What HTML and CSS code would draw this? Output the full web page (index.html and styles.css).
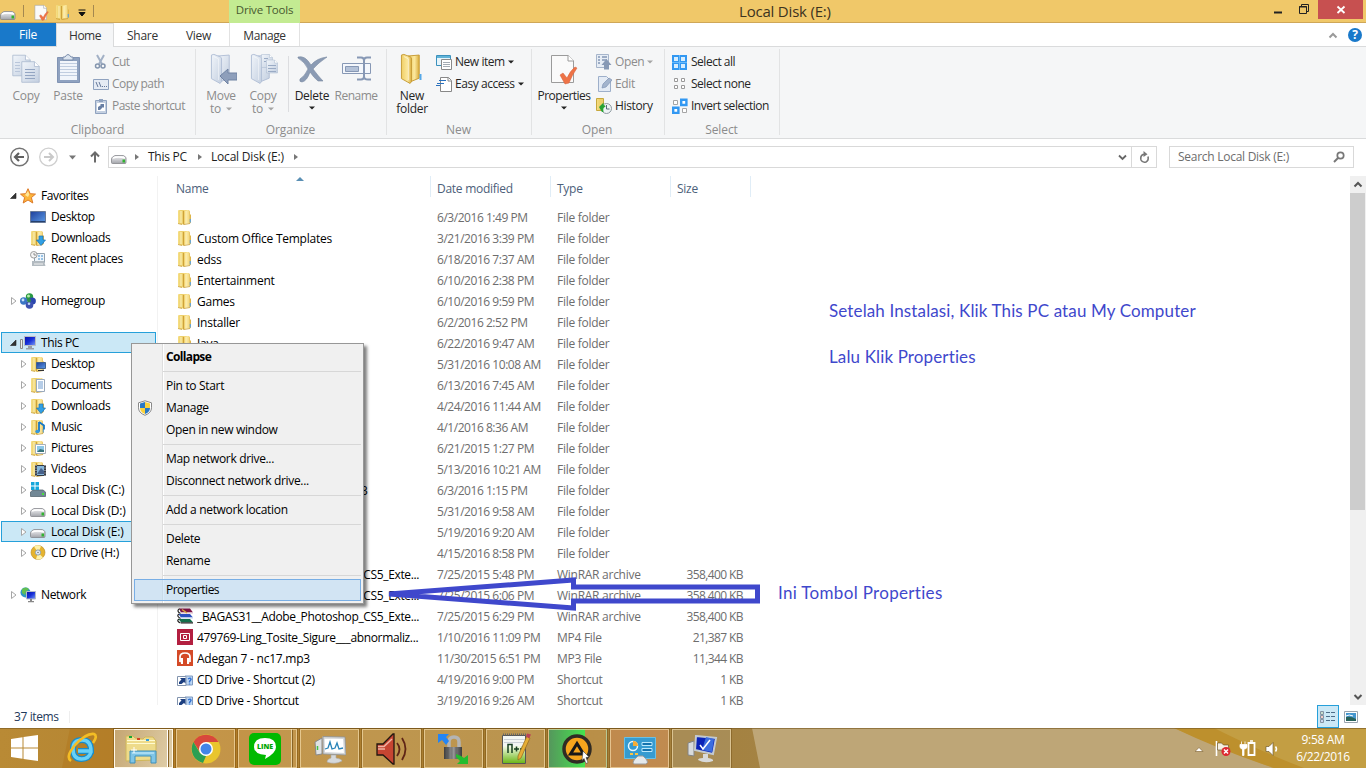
FILE: index.html
```html
<!DOCTYPE html>
<html lang="en">
<head>
<meta charset="utf-8">
<title>Local Disk (E:)</title>
<link rel="stylesheet" href="styles.css">
</head>
<body>
<svg class="defs" width="0" height="0">
  <defs>
    <linearGradient id="gold" x1="0" x2="1"><stop offset="0" stop-color="#f6df86"/><stop offset=".5" stop-color="#edd06a"/><stop offset="1" stop-color="#ecd070"/></linearGradient>
    <linearGradient id="goldB" x1="0" x2="1"><stop offset="0" stop-color="#f0cf66"/><stop offset=".6" stop-color="#fbe79c"/><stop offset="1" stop-color="#d9ab3a"/></linearGradient>
    <linearGradient id="steel" x1="0" y1="0" x2="1" y2="1"><stop offset="0" stop-color="#f1f5fa"/><stop offset="1" stop-color="#c3cfe0"/></linearGradient>
    <linearGradient id="blue" x1="0" y1="0" x2="1" y2="1"><stop offset="0" stop-color="#1d3f9b"/><stop offset="1" stop-color="#5d9be6"/></linearGradient>
    <linearGradient id="deep" x1="0" y1="0" x2="1" y2="1"><stop offset="0" stop-color="#0410a8"/><stop offset=".5" stop-color="#1830d8"/><stop offset="1" stop-color="#7da0f4"/></linearGradient>
    <linearGradient id="metal" x1="0" y1="0" x2="0" y2="1"><stop offset="0" stop-color="#f6f6f8"/><stop offset="1" stop-color="#a2a4aa"/></linearGradient>
    <linearGradient id="lock" x1="0" x2="1"><stop offset="0" stop-color="#3e3e3e"/><stop offset=".5" stop-color="#9a9a9a"/><stop offset="1" stop-color="#3c3c3c"/></linearGradient>
    <linearGradient id="lime" x1="0" y1="0" x2="0" y2="1"><stop offset="0" stop-color="#f4fbe9"/><stop offset="1" stop-color="#6cb719"/></linearGradient>
    <symbol id="folder" viewBox="0 0 16 16"><path d="M1 1.500Q1 1 2 1h5v13.500l-1 1-5-1z" fill="url(#gold)"/><path d="M6.500 2Q6.500 1 8 1h4l1 1.500V5l1 1v7.500l-1 1H8.500L6.500 16z" fill="url(#goldB)"/><path d="M6.500 2v13.500" stroke="#c99c34" stroke-width=".9"/><path d="M4 2v12M9 2v12" stroke="#fff8cf" stroke-width=".9"/><path d="M1 14.500l4 1M7 15.500l6-1" stroke="#c99f3b" stroke-width=".8"/><path d="M13.300 10v3.500" stroke="#5fa3dc" stroke-width="1.200"/></symbol>
    <symbol id="desktop" viewBox="0 0 16 16"><path d="M.5 2.500h15v11H.5z" fill="url(#blue)" stroke="#687a98"/><path d="M1 12.500h14" stroke="#25406d"/></symbol>
    <symbol id="down" viewBox="0 0 16 16"><use href="#folder"/><path d="M9 6h4v4h2.500L11 15.500 6.500 10H9z" fill="#31a0e4" stroke="#1c72b5" stroke-width=".7"/></symbol>
    <symbol id="fdesk" viewBox="0 0 16 16"><use href="#folder"/><path d="M6.500 6.500h9v6h-9z" fill="url(#blue)" stroke="#43648f"/><path d="M8 14.500h6" stroke="#333"/></symbol>
    <symbol id="fdoc" viewBox="0 0 16 16"><use href="#folder"/><path d="M6.500 2.500h8v12h-8z" fill="#fff" stroke="#9aa9ba"/><path d="M8 5h5M8 7h5M8 9h5M8 11h5" stroke="#6c9bd0"/></symbol>
    <symbol id="fmus" viewBox="0 0 16 16"><use href="#folder"/><path d="M9 3v9.500M9 3l5 3.500v4" stroke="#1679c8" stroke-width="1.800" fill="none"/><ellipse cx="7.500" cy="12.500" rx="2.200" ry="1.800" fill="#3599dd"/></symbol>
    <symbol id="fpic" viewBox="0 0 16 16"><use href="#folder"/><path d="M5.500 4.500h10v9h-10z" fill="#fff" stroke="#a8b0b8"/><path d="M7 6h7v6H7z" fill="#8cc7e7"/><path d="M7 12l3-3 4 1v2z" fill="#39757b"/></symbol>
    <symbol id="fvid" viewBox="0 0 16 16"><use href="#folder"/><path d="M5 4h11v11H5z" fill="#353b45"/><path d="M7 5h7v9H7z" fill="#85b5d9"/><path d="M7 13l4-6 3 3v3z" fill="#47618a"/><path d="M6 4v11M15 4v11" stroke="#ddd" stroke-dasharray="1 1.500"/></symbol>
    <symbol id="recent" viewBox="0 0 16 16"><path d="M4.500 2.500h10v9h-10z" fill="#eef5fb" stroke="#93a1ad"/><path d="M2 10h12l1.500 5H2z" fill="#b3bbc1"/><path d="M8 5h2M11 5h2M8 8h2M11 8h2" stroke="#3e8fd0"/><circle cx="3.800" cy="3.800" r="3.300" fill="#f4f4f4" stroke="#9b9b9b"/><path d="M4 2v2h2" stroke="#777" fill="none" stroke-width=".8"/><path d="M4 13h9" stroke="#f1f1f1"/></symbol>
    <symbol id="star" viewBox="0 0 16 16"><path d="M8 .7l2.200 5 5.300.4-4.100 3.500 1.400 5.400L8 12l-4.800 3 1.400-5.400L.5 6.100l5.300-.4z" fill="#fcb53b" stroke="#dd7927"/><path d="M8 3l1.300 3.500L8 9 5 7z" fill="#ffe79a"/></symbol>
    <symbol id="home" viewBox="0 0 16 16"><circle cx="9.500" cy="4" r="3.700" fill="#2a9a43"/><circle cx="3.700" cy="8" r="3.700" fill="#3a75c4"/><circle cx="12.300" cy="8" r="3.600" fill="#2b46ae"/><circle cx="9.500" cy="12" r="3.800" fill="#3d52b0"/><circle cx="9" cy="7.500" r="2" fill="#2f8a4c"/><circle cx="8.500" cy="3" r="1.500" fill="#b9eda9"/><circle cx="3" cy="7" r="1.400" fill="#c8e2fa"/><circle cx="9" cy="10.800" r="1.300" fill="#bcd0f5"/></symbol>
    <symbol id="pc" viewBox="0 0 16 16"><path d="M.5 4.500h2v9h-2z" fill="#eee" stroke="#888"/><path d="M4.500 1.500h11v9h-11z" fill="url(#deep)" stroke="#b8bcc4"/><path d="M8 11h4v2h2v1.500H6V13h2z" fill="#999da5"/></symbol>
    <symbol id="net" viewBox="0 0 16 16"><circle cx="5.500" cy="5.500" r="5" fill="#2d95c5"/><path d="M2 2q4-3 7 0L6 5 5 8 2 6z" fill="#61bf51"/><path d="M6.500 4.500h9v7.500h-9z" fill="url(#deep)" stroke="#b5bdc8"/><path d="M10 12h2v2h2v1.200H8V14h2z" fill="#888"/></symbol>
    <symbol id="drive" viewBox="0 0 16 16"><path d="M1.500 7 4 5.500h8.500L15 7.500v5q0 1-1 1H1.500q-1 0-1-1V8.500z" fill="url(#metal)" stroke="#85878c" stroke-width=".8"/><path d="M2 8q5-1.800 12 0" stroke="#fff" stroke-width="1.500" fill="none"/><path d="M11.500 9.500h2.500v3h-2.500z" fill="#31b330"/></symbol>
    <symbol id="cdrive" viewBox="0 0 16 16"><path d="M.5 10 3 8h10l2.500 2v4.500H.5z" fill="#718795" stroke="#586771" stroke-width=".8"/><path d="M12 11h2v2h-2z" fill="#48e03c"/><path d="M1 0h3.500v3.500H1zM5.500 0H9v3.500H5.500zM1 4.500h3.500V8H1zM5.500 4.500H9V8H5.500z" fill="#15a7db"/></symbol>
    <symbol id="cd" viewBox="0 0 16 16"><circle cx="8" cy="7.500" r="7" fill="#e5b32e" stroke="#b48a26" stroke-width=".6"/><path d="M8 7.500 4 1.500Q8-1 11 1.500zM8 7.500l5 5q-3 3-7 1.500z" fill="#fff1a8"/><circle cx="8" cy="7.500" r="2.600" fill="#e7eef5" stroke="#8ba0b3"/><circle cx="8" cy="7.500" r=".8" fill="#777"/></symbol>
    <symbol id="rar" viewBox="0 0 16 16"><path d="M2 .5h11l3 4H4z" fill="#7d1345"/><path d="M4 4.500h12V6H4z" fill="#efdde2"/><path d="M1.500 6H13l3 3.500H4z" fill="#2b50c0"/><path d="M4 9.500h12V11H4z" fill="#dfe9f5"/><path d="M1.500 11H13l3 3.300H4z" fill="#136e4b"/><path d="M4 14.300h12v1.200H4z" fill="#1b1b1b"/><path d="M2.500.7Q-1 3 3.500 5.500M2 6q-3 2 1.500 4.500M2 11q-3 2 1.500 4" stroke="#222" stroke-width="1.200" fill="none"/><path d="M5 1.500l5 3.500" stroke="#d8a740" stroke-width="1.500"/></symbol>
    <symbol id="mp4" viewBox="0 0 16 16"><path d="M0 0h16v16H0z" fill="#b31f40"/><path d="M3.500 4.500h9v7h-9z" fill="none" stroke="#fff"/><path d="M6.500 6.500h3v3h-3z" fill="none" stroke="#fff"/></symbol>
    <symbol id="mp3" viewBox="0 0 16 16"><path d="M0 0h16v16H0z" fill="#d44a27"/><path d="M3 12V7q0-4 5-4t5 4v5" stroke="#fff" stroke-width="1.700" fill="none"/><path d="M3 8h3v6H4zM10 8h3l-1 6h-2z" fill="#fff"/></symbol>
    <symbol id="short" viewBox="0 0 16 16"><path d="M8 5h7.500v9H8z" fill="#bcd6f4" stroke="#7e9ac1"/><path d="M.5 5.500h8.500v9H.5z" fill="#fff" stroke="#8294ae"/><path d="M2 13v-2l2.500-2.500L3 7h5.500v5.500L7 11l-2.500 2z" fill="#1c3f80"/><path d="M11 8q3-2 3 .5l-1.500 2v1M12.500 12.500v1" stroke="#306fd0" fill="none" stroke-width="1.400"/></symbol>
    <symbol id="page" viewBox="0 0 24 28"><path d="M1 1h16l6 6v20H1z" fill="url(#steel)" stroke="#a9b8ce"/><path d="M17 1v6h6" fill="#fff" stroke="#a9b8ce"/></symbol>
    <symbol id="bigfolder" viewBox="0 0 26 32"><path d="M8 2.500 20 1.500v24L9 30z"/><path d="M1.500 1.500 4 .8l7 2.700q1 .5 1 2V29l-1.500 2-9-5z"/><path d="M4 3l5 2.500v22" fill="none" stroke="#fff" stroke-width="1" opacity=".55"/></symbol>
    <symbol id="check" viewBox="0 0 28 32"><path d="M1.500 2.500h17l5 5v22h-22z" fill="#fafafa" stroke="#9b9b9b"/><path d="M18 2v6h6" fill="#fff" stroke="#9b9b9b"/><path d="M10 22l3-2 4 5q3-7 8-11l2 1q-5 7-8 15l-4 1z" fill="#ee7347" stroke="#d45f38" stroke-width=".5"/></symbol>
    <symbol id="closed" viewBox="0 0 8 10"><path d="M2.500 1.500 7 5 2.500 8.500z" fill="#fff" stroke="#a6a6a6"/></symbol>
    <symbol id="opened" viewBox="0 0 8 10"><path d="M7 2v5.500H1.500z" fill="#333" stroke="#222" stroke-width=".6"/></symbol>
    <symbol id="caret" viewBox="0 0 6 4"><path d="M0 .5h6L3 3.500z" fill="currentColor"/></symbol>
  </defs>
</svg>

<div class="window">
  <header class="titlebar">
    <div class="quick">
      <svg width="16" height="16"><use href="#drive"/></svg><i class="bar"></i>
      <svg class="q2" width="15" height="17"><use href="#check"/></svg>
      <svg class="q3" width="16" height="16"><use href="#folder"/></svg>
      <svg class="q4" width="8" height="8"><path d="M.5 1h7M1 3.500h6L4 7z" stroke="#111" fill="#111" stroke-width="1"/></svg><i class="bar"></i>
    </div>
    <div class="drive-tools">Drive Tools</div>
    <div class="caption">Local Disk (E:)</div>
    <div class="controls">
      <svg width="90" height="20"><path d="M10 12.500h8" stroke="#222" stroke-width="2"/><path d="M35.500 6.500h7v7h-7z M37.500 6V4.500h7v7H43" fill="none" stroke="#222"/><path d="M35 7h8" stroke="#222"/></svg>
      <div class="close"><svg width="10" height="10"><path d="M1.500 1.500l7 6.500M8.500 1.500l-7 6.500" stroke="#fff" stroke-width="1.800"/></svg></div>
    </div>
  </header>

  <nav class="tabs">
    <div class="tab file">File</div><div class="tab home">Home</div><div class="tab share">Share</div><div class="tab view">View</div><div class="tab manage">Manage</div>
    <div class="help"><svg width="10" height="8"><path d="M1.500 6.500 5 3l3.500 3.500" stroke="#9a9a9a" stroke-width="2" fill="none"/></svg><b>?</b></div>
  </nav>

  <section class="ribbon">
    <div class="group clip"><div class="tools">
      <div class="big off"><svg width="28" height="32"><use href="#page" x="0" y="0" width="19" height="25"/><use href="#page" x="9" y="7" width="19" height="24"/><path d="M13 16.500h10M13 19.500h10M13 22.500h10M13 25.500h10" stroke="#93a5c2"/><path d="M3 9.500h5M3 12.500h5M3 15.500h5M3 18.500h5" stroke="#b9c6da"/></svg>Copy</div>
      <div class="big off"><svg width="28" height="32"><path d="M3.500 4.500h22v25h-22z" fill="#8fa2c0" stroke="#8093b3"/><path d="M6 8h17v19H6z" fill="#f1f5fb"/><path d="M9 4h2q3-5 6 0h2v3H9z" fill="#dce5f0" stroke="#7a8dab"/><path d="M6 10.500h17M6 13.500h17M6 16.500h17M6 19.500h17M6 22.500h17" stroke="#c0cde0"/></svg>Paste</div>
      <div class="list off">
        <div><svg width="16" height="16"><path d="M4 1l5 9M11 1l-5 9" stroke="#a3b1c6" stroke-width="2"/><circle cx="4.500" cy="12" r="2" fill="none" stroke="#8495ae" stroke-width="1.500"/><circle cx="10" cy="12" r="2" fill="none" stroke="#8495ae" stroke-width="1.500"/></svg>Cut</div>
        <div><svg width="16" height="16"><path d="M.5 3.500h15v10H.5z" fill="#e5ebf4" stroke="#8fa2bf"/><path d="M3 6l2 5M6 6l2 5M9 10.500h1M11 10.500h1M13 10.500h1" stroke="#66799b"/></svg>Copy path</div>
        <div><svg width="16" height="16"><path d="M2.500 2.500h11v13h-11z" fill="#c4d0e1" stroke="#8fa2bf"/><path d="M4 5h8v8H4z" fill="#fff"/><path d="M6 1h4v3H6z" fill="#8fa2bf"/><path d="M5 12V9l3-2-1-1h4v4l-1-1-3 3z" fill="#687fa4"/></svg>Paste shortcut</div>
      </div></div><footer>Clipboard</footer></div>
    <div class="group org"><div class="tools">
      <div class="big off"><svg width="32" height="32"><use href="#bigfolder" x="5" y="0" width="25" height="32" fill="url(#steel)" stroke="#b2c0d6"/><path d="M15 23l8-7v4h9v7h-9v4z" fill="#8e9fbb" stroke="#7083a3"/></svg><span>Move<br>to <svg class="car" width="6" height="4"><use href="#caret"/></svg></span></div>
      <div class="big off"><svg width="32" height="32"><use href="#bigfolder" x="3" y="0" width="25" height="32" fill="url(#steel)" stroke="#b2c0d6"/><use href="#page" x="14" y="0" width="12" height="16"/><use href="#page" x="19" y="5" width="12" height="17"/><path d="M21 12.500h8M21 15.500h8M21 18.500h8M17 5.500h4M17 8.500h2" stroke="#9aabc5"/></svg><span>Copy<br>to <svg class="car" width="6" height="4"><use href="#caret"/></svg></span></div>
      <i class="split"></i>
      <div class="big del"><svg width="32" height="32"><path d="M2 4q7-2 13 8 6-7 16-8-9 6-14 12 6 8 10 12h-5q-4-3-8-9-3 9-8 10-3 0-2-3 5-3 8-10Q9 9 2 5z" fill="#8b9bb4" stroke="#76879f" stroke-width=".6"/></svg>Delete<svg class="car" width="6" height="4"><use href="#caret"/></svg></div>
      <div class="big off"><svg width="32" height="32"><path d="M2.500 10.500h28v10h-28z" fill="#f4f7fc" stroke="#8798b5"/><path d="M5.500 13.500h13v5h-13z" fill="#b4c2d8" stroke="#8798b5"/><path d="M17 4.500h4q3 0 3 3v16q0 3-3 3h-4M31 4.500h-4q-3 0-3 3M24 23.500q0 3 4 3h3" stroke="#8798b5" stroke-width="2" fill="none"/></svg>Rename</div>
      </div><footer>Organize</footer></div>
    <div class="group new"><div class="tools">
      <div class="big"><svg width="28" height="32"><use href="#bigfolder" x="2" y="0" width="25" height="32" fill="url(#goldB)" stroke="#c79c37"/><path d="M22.500 21v6" stroke="#55a8e8" stroke-width="2"/></svg><span>New<br>folder</span></div>
      <div class="list"><div><svg width="16" height="16"><path d="M.5 1.500h14v10H.5z" fill="#e7f4fa" stroke="#3b91bd"/><path d="M1 3h13" stroke="#61b3d7" stroke-width="2"/><path d="M5.500 5.500h10v10h-10z" fill="#fff" stroke="#8a8a8a"/><path d="M7 8.500h7M7 10.500h7M7 12.500h7" stroke="#a4acb4"/></svg>New item<svg class="car" width="6" height="4"><use href="#caret"/></svg></div>
      <div><svg width="16" height="16"><path d="M4.500 1.500h8l3 3v11h-11z" fill="#fff" stroke="#888"/><path d="M12 1.500v3.500h3" stroke="#888" fill="none"/><path d="M3 4.500h7M1 7.500h7M0 9.500h4" stroke="#2a71be" stroke-width="1.200"/></svg>Easy access<svg class="car" width="6" height="4"><use href="#caret"/></svg></div></div>
      </div><footer>New</footer></div>
    <div class="group open"><div class="tools">
      <div class="big prop"><svg width="28" height="32"><use href="#check"/></svg>Properties<svg class="car" width="6" height="4"><use href="#caret"/></svg></div>
      <div class="list"><div class="off"><svg width="16" height="16"><path d="M.5.5h12v13H.5z" fill="#e7edf5" stroke="#a6b5cb"/><path d="M2 3h2M2 6h2M2 9h2M6 3h5M6 6h5" stroke="#8497b5" stroke-width="1.500"/><path d="M10.500 5l5 6H13v4.500H8V11H5.500z" fill="#8799b5"/></svg>Open<svg class="car" width="6" height="4"><use href="#caret"/></svg></div>
      <div class="off"><svg width="16" height="16"><path d="M2.500.5h8l4 4v11h-12z" fill="#e4ebf5" stroke="#9dafca"/><path d="M6 12l1-4 6-6 3 2-6 7z" fill="#a3b4cd" stroke="#8094b5" stroke-width=".7"/></svg>Edit</div>
      <div><svg width="16" height="16"><path d="M.5.5h7v12h-7z" fill="url(#gold)" stroke="#c7a83d"/><circle cx="10.500" cy="10.500" r="5" fill="#eef3f5" stroke="#8d999f"/><path d="M10.500 7v4h3" stroke="#576a79" fill="none"/><path d="M3 9l4.500-4.500V7q2 0 2 2-3 0-2 5H6Q4 11 3 9z" fill="#28a334"/></svg>History</div></div>
      </div><footer>Open</footer></div>
    <div class="group sel"><div class="tools"><div class="list">
      <div><svg width="16" height="16"><path d="M0 1h15v15H0z" fill="#3298f2"/><path d="M2 3h4v4H2zM9 3h4v4H9zM2 10h4v4H2zM9 10h4v4H9z" fill="#d8eefe"/><path d="M7.500 1v15M0 8.500h15" stroke="#69bafb"/></svg>Select all</div>
      <div><svg width="16" height="16"><path d="M2.500 2.500h3v3h-3zM9.500 2.500h3v3h-3zM2.500 9.500h3v3h-3zM9.500 9.500h3v3h-3z" fill="#fff" stroke="#9a9a9a"/></svg>Select none</div>
      <div><svg width="16" height="16"><path d="M1.500 2.500h4v4h-4zM10.500 10.500h4v4h-4z" fill="#fff" stroke="#a5a5a5"/><path d="M9.200 1.700h5.200V7H9.200zM1.200 9.700h5.200V15H1.200z" fill="#fff" stroke="#3298f2" stroke-width="2.400"/></svg>Invert selection</div>
      </div></div><footer>Select</footer></div>
  </section>

  <section class="address">
    <svg width="104" height="32"><circle cx="19.500" cy="17" r="8.800" fill="#fff" stroke="#747474" stroke-width="1.500"/><path d="M24 17H15.500M19 13l-4 4 4 4" stroke="#606060" stroke-width="2.200" fill="none"/><circle cx="48.500" cy="17" r="8.800" fill="#fff" stroke="#cfcfcf" stroke-width="1.300"/><path d="M44 17H52.500M49 13l4 4-4 4" stroke="#c9c9c9" stroke-width="2" fill="none"/><path d="M69 15.500h7l-3.500 4z" fill="#777"/><path d="M95 22.500V13M91 16.500l4-4 4 4" stroke="#6b6b6b" stroke-width="2" fill="none"/></svg>
    <div class="path"><svg width="16" height="16"><use href="#drive"/></svg><i class="arrow"></i><span class="a1">This PC</span><i class="arrow"></i><span class="a2">Local Disk (E:)</span><i class="arrow"></i>
      <div class="refresh"><svg width="36" height="20"><path d="M2 8.500l3.500 3.500L9 8.500" stroke="#666" stroke-width="1.800" fill="none"/><path d="M14.500 0v20" stroke="#d9d9d9"/><path d="M31 9.500q1 4-2 5.500-3.500 1-5-2-1-4 2-5.500h2" stroke="#777" stroke-width="1.600" fill="none"/><path d="M26.500 4l4 3.200-4 2.800z" fill="#777"/></svg></div></div>
    <div class="search"><span>Search Local Disk (E:)</span><svg width="12" height="12"><circle cx="7.500" cy="4.500" r="3.200" fill="none" stroke="#777" stroke-width="1.700"/><path d="M5 7 1 11" stroke="#777" stroke-width="2"/></svg></div>
  </section>

  <main class="body">
    <aside class="side">
      <div class="node top"><svg class="tw"><use href="#opened"/></svg><svg class="ic"><use href="#star"/></svg>Favorites</div>
      <div class="node"><svg class="tw"></svg><svg class="ic"><use href="#desktop"/></svg>Desktop</div>
      <div class="node"><svg class="tw"></svg><svg class="ic"><use href="#down"/></svg>Downloads</div>
      <div class="node"><svg class="tw"></svg><svg class="ic"><use href="#recent"/></svg>Recent places</div>
      <div class="node"></div>
      <div class="node top"><svg class="tw"><use href="#closed"/></svg><svg class="ic"><use href="#home"/></svg>Homegroup</div>
      <div class="node"></div>
      <div class="node top on"><svg class="tw"><use href="#opened"/></svg><svg class="ic"><use href="#pc"/></svg>This PC</div>
      <div class="node"><svg class="tw"><use href="#closed"/></svg><svg class="ic"><use href="#fdesk"/></svg>Desktop</div>
      <div class="node"><svg class="tw"><use href="#closed"/></svg><svg class="ic"><use href="#fdoc"/></svg>Documents</div>
      <div class="node"><svg class="tw"><use href="#closed"/></svg><svg class="ic"><use href="#down"/></svg>Downloads</div>
      <div class="node"><svg class="tw"><use href="#closed"/></svg><svg class="ic"><use href="#fmus"/></svg>Music</div>
      <div class="node"><svg class="tw"><use href="#closed"/></svg><svg class="ic"><use href="#fpic"/></svg>Pictures</div>
      <div class="node"><svg class="tw"><use href="#closed"/></svg><svg class="ic"><use href="#fvid"/></svg>Videos</div>
      <div class="node disk"><svg class="tw"><use href="#closed"/></svg><svg class="ic"><use href="#cdrive"/></svg>Local Disk (C:)</div>
      <div class="node disk"><svg class="tw"><use href="#closed"/></svg><svg class="ic"><use href="#drive"/></svg>Local Disk (D:)</div>
      <div class="node on disk"><svg class="tw"><use href="#closed"/></svg><svg class="ic"><use href="#drive"/></svg>Local Disk (E:)</div>
      <div class="node disk"><svg class="tw"><use href="#closed"/></svg><svg class="ic"><use href="#cd"/></svg>CD Drive (H:)</div>
      <div class="node"></div>
      <div class="node top"><svg class="tw"><use href="#closed"/></svg><svg class="ic"><use href="#net"/></svg>Network</div>
    </aside>
    <div class="files">
      <div class="head"><span>Name</span><span>Date modified</span><span>Type</span><span>Size</span><svg class="sort" width="8" height="4"><path d="M0 4 4 0l4 4z" fill="#5a8fb4"/></svg></div>
      <div class="row"><svg><use href="#folder"/></svg><b></b><span>6/3/2016 1:49 PM</span><span>File folder</span></div>
      <div class="row"><svg><use href="#folder"/></svg><b>Custom Office Templates</b><span>3/21/2016 3:39 PM</span><span>File folder</span></div>
      <div class="row"><svg><use href="#folder"/></svg><b>edss</b><span>6/18/2016 7:37 AM</span><span>File folder</span></div>
      <div class="row"><svg><use href="#folder"/></svg><b>Entertainment</b><span>6/10/2016 2:38 PM</span><span>File folder</span></div>
      <div class="row"><svg><use href="#folder"/></svg><b>Games</b><span>6/10/2016 9:59 PM</span><span>File folder</span></div>
      <div class="row"><svg><use href="#folder"/></svg><b>Installer</b><span>6/2/2016 2:52 PM</span><span>File folder</span></div>
      <div class="row"><svg><use href="#folder"/></svg><b>Java</b><span>6/22/2016 9:47 AM</span><span>File folder</span></div>
      <div class="row"><svg><use href="#folder"/></svg><b></b><span>5/31/2016 10:08 AM</span><span>File folder</span></div>
      <div class="row"><svg><use href="#folder"/></svg><b></b><span>6/13/2016 7:45 AM</span><span>File folder</span></div>
      <div class="row"><svg><use href="#folder"/></svg><b></b><span>4/24/2016 11:44 AM</span><span>File folder</span></div>
      <div class="row"><svg><use href="#folder"/></svg><b></b><span>4/1/2016 8:36 AM</span><span>File folder</span></div>
      <div class="row"><svg><use href="#folder"/></svg><b></b><span>6/21/2015 1:27 PM</span><span>File folder</span></div>
      <div class="row"><svg><use href="#folder"/></svg><b></b><span>5/13/2016 10:21 AM</span><span>File folder</span></div>
      <div class="row"><svg><use href="#folder"/></svg><b class="tail">3</b><span>6/3/2016 1:15 PM</span><span>File folder</span></div>
      <div class="row"><svg><use href="#folder"/></svg><b></b><span>5/31/2016 9:58 AM</span><span>File folder</span></div>
      <div class="row"><svg><use href="#folder"/></svg><b></b><span>5/19/2016 9:20 AM</span><span>File folder</span></div>
      <div class="row"><svg><use href="#folder"/></svg><b></b><span>4/15/2016 8:58 PM</span><span>File folder</span></div>
      <div class="row"><svg><use href="#rar"/></svg><b class="rar">_BAGAS31__Adobe_Photoshop_CS5_Exte...</b><span>7/25/2015 5:48 PM</span><span>WinRAR archive</span><em>358,400 KB</em></div>
      <div class="row"><svg><use href="#rar"/></svg><b class="rar">_BAGAS31__Adobe_Photoshop_CS5_Exte...</b><span>7/25/2015 6:06 PM</span><span>WinRAR archive</span><em>358,400 KB</em></div>
      <div class="row"><svg><use href="#rar"/></svg><b class="rar">_BAGAS31__Adobe_Photoshop_CS5_Exte...</b><span>7/25/2015 6:29 PM</span><span>WinRAR archive</span><em>358,400 KB</em></div>
      <div class="row"><svg><use href="#mp4"/></svg><b class="rar">479769-Ling_Tosite_Sigure___abnormaliz...</b><span>1/10/2016 11:09 PM</span><span>MP4 File</span><em>21,387 KB</em></div>
      <div class="row"><svg><use href="#mp3"/></svg><b>Adegan 7 - nc17.mp3</b><span>11/30/2015 6:51 PM</span><span>MP3 File</span><em>11,344 KB</em></div>
      <div class="row"><svg><use href="#short"/></svg><b>CD Drive - Shortcut (2)</b><span>4/19/2016 9:00 PM</span><span>Shortcut</span><em>1 KB</em></div>
      <div class="row"><svg><use href="#short"/></svg><b>CD Drive - Shortcut</b><span>3/19/2016 9:26 AM</span><span>Shortcut</span><em>1 KB</em></div>
    </div>
    <div class="scroll"><svg width="16" height="16"><path d="M4.500 10.500 8 7l3.500 3.500" stroke="#555" stroke-width="2" fill="none"/></svg><i></i><svg width="16" height="16"><path d="M4.500 6l3.500 3.500L11.500 6" stroke="#555" stroke-width="2" fill="none"/></svg></div>
  </main>

  <footer class="status"><span>37 items</span><i></i>
    <div class="views"><div class="details"><svg width="16" height="14"><path d="M.5 1.500h3v3h-3zM.5 5.500h3v3h-3zM.5 9.500h3v3h-3z" fill="#fff" stroke="#8493a3"/><path d="M1.500 3h1" stroke="#277b3e"/><path d="M1.500 7h1" stroke="#d43122"/><path d="M1.500 11h1" stroke="#2a62bf"/><path d="M6 2.500h4M11 2.500h4M6 6.500h4M11 6.500h4M6 10.500h4M11 10.500h4" stroke="#4d6d89"/></svg></div><svg width="14" height="12"><path d="M.5.5h13v11H.5z" fill="#fff" stroke="#9aa4ae"/><path d="M2 2h10v8H2z" fill="#4597cf"/><path d="M2 6q5-1 10 2v2H2z" fill="#29635a"/><path d="M2 5q3-2 7 0" stroke="#fff" fill="none"/></svg></div>
  </footer>
</div>

<footer class="taskbar">
  <svg class="wall" width="1366" height="40"><defs><linearGradient id="wood"><stop offset="0" stop-color="#b98a35"/><stop offset=".35" stop-color="#b1802f"/><stop offset=".7" stop-color="#a57c31"/><stop offset="1" stop-color="#a48344"/></linearGradient></defs><path d="M0 0h770v40H0z" fill="url(#wood)"/><path d="M70 0h200v40H62z" fill="#b37a22" opacity=".6"/><path d="M752 0h450l100 40H760z" fill="#bea677"/><path d="M1174 0q60 26 100 40h92V0z" fill="#c39e43"/><path d="M1174 0h40q50 25 90 40h-30Q1220 22 1174 0z" fill="#bd902d"/><path d="M0 .5h1366" stroke="#7c5c24" opacity=".65"/></svg>
  <div class="start"><svg width="28" height="26"><path d="M0 4 11.500 2.300v10.200H0zM12.500 2.100 27 0v12.500H12.500zM0 13.500h11.500v10.200L0 22zM12.500 13.500H27V26l-14.500-2.100z" fill="#fff"/></svg></div>
  <div class="ie"><svg width="32" height="32"><path d="M25 20q-2 7-9.500 7Q7 27 7 17q0-9 9-9 9 0 9 11H12" fill="none" stroke="#198cc9" stroke-width="6"/><path d="M25 20q-2 7-9.500 7Q7 27 7 17q0-9 9-9 9 0 9 11H12" fill="none" stroke="#68d1f8" stroke-width="3.500"/><path d="M5 29q-6-4 4-16Q20 1 28 2q4 2-1 9" fill="none" stroke="#f4bd24" stroke-width="2.600"/></svg></div>
  <div class="task active stack"><svg width="32" height="32"><path d="M1 6V3h7l2 2 8 1 2-2h8l3 4v19L1 28z" fill="#eedb8a" stroke="#d0b75a"/><path d="M2 7.500h28M2 10.500h28" stroke="#fffbd2"/><path d="M4 4h3" stroke="#18a63b" stroke-width="2"/><path d="M12 6h3" stroke="#d54324" stroke-width="2"/><path d="M21 7h3" stroke="#359ddc" stroke-width="2"/><path d="M5 18h26v12h-5v-7H10v7H5z" fill="#7fc5e6" stroke="#3e8fb9"/><path d="M7 20h22" stroke="#d1f1ff"/><path d="M9 14v6M6 17h6" stroke="#fff"/></svg></div>
  <div class="task"><svg width="32" height="32"><circle cx="16" cy="16" r="14.500" fill="#e9c52e"/><path d="M3.400 9A14.500 14.500 0 0 1 28.600 9H16L10 19z" fill="#d8483c"/><path d="M3.400 9 10 20l6 3-3 7A14.500 14.500 0 0 1 3.400 9z" fill="#2b9f53"/><circle cx="16" cy="16" r="7" fill="#fff"/><circle cx="16" cy="16" r="5.500" fill="#4285e8"/></svg></div>
  <div class="task stack"><div class="line"><svg width="32" height="32"><path d="M5 14q0-9 11-9t11 9q0 6-11 12l1-4Q5 21 5 14z" fill="#fff"/></svg><b>LINE</b></div></div>
  <div class="task"><svg width="32" height="32"><path d="M1 9l7-4v16l-6 1z" fill="#dfe2e4" stroke="#888"/><path d="M3.500 13v4" stroke="#43c243" stroke-width="1.500"/><path d="M9.500 4.500 30 5l1 16-21-1z" fill="#fff" stroke="#d2d5d8" stroke-width="2"/><path d="M9 3.500 31 4l1 18-23-1z" fill="none" stroke="#8d9194" stroke-width=".8"/><path d="M11 16l3-1 2-6 2 7 3-1 2-5 2 6 4-1" fill="none" stroke="#2984b8" stroke-width="1.300"/><path d="M17 22h5v3q6 1 6 3-7 4-15 1 0-3 4-4z" fill="#d6d9db" stroke="#aaa" stroke-width=".6"/></svg></div>
  <div class="task"><svg width="32" height="32"><path d="M1 11h6L17 1h1v30h-1L7 22H1z" fill="#c64532" stroke="#221610" stroke-width="1.300"/><path d="M2 13.500h6L16 6M2 16h7" stroke="#f0b3a3" stroke-width="1.500" fill="none"/><path d="M21 10q5 6 0 13M26 5q7 11 0 22" fill="none" stroke="#5f2516" stroke-width="1.800"/></svg></div>
  <div class="task"><svg width="32" height="32"><path d="M11 15V9q0-5 5-5t5 5v6" fill="none" stroke="#b4b4b4" stroke-width="3.500"/><path d="M0 1h11L8 4l3 4-3 4-4-5-4 3z" fill="#2485f4"/><path d="M6 14h18v12H6z" fill="url(#lock)"/><path d="M10 14v12M14 14v12M18 14v12" stroke="#444" opacity=".4"/><path d="M18 21l5 2 3 2 4-3v9H19l3-3-4-4z" fill="#23bd2e"/></svg></div>
  <div class="task"><svg width="32" height="34"><path d="M2.500 3.500h23v28h-23z" fill="#f3f6f3" stroke="#555"/><path d="M3 14h22v17H3z" fill="url(#lime)"/><path d="M4 7.500h21M4 10.500h21" stroke="#cbd0d6"/><path d="M3 2.500h23" stroke="#666" stroke-width="2" stroke-dasharray="1 1"/><path d="M8 21v-8.500h4V21M14 17h5M16.500 14.500v5M20 17h5M22.500 14.500v5" stroke="#173f21" stroke-width="1.500" fill="none"/><path d="M27 4l3 2-9 20-3 2v-4z" fill="#e5ae36" stroke="#97671a" stroke-width=".7"/><path d="M27 1.500l4 1-2 4-3-2z" fill="#ba4258"/></svg></div>
  <div class="task aimp"><svg width="32" height="32"><circle cx="16" cy="16" r="13" fill="#f6a51d" stroke="#302b24" stroke-width="3.500"/><path d="M16 10.500 22.500 21h-13z" fill="none" stroke="#191919" stroke-width="3"/><path d="M22 18l6 6-3 .5 2 5-2 1-2-5-2 2z" fill="#fff" stroke="#333" stroke-width=".5"/></svg></div>
  <div class="task warm"><svg width="34" height="32"><path d="M1.500 4.500h31v21h-31z" fill="#369bd0" stroke="#69c0e5"/><circle cx="10" cy="13" r="4.500" fill="none" stroke="#e8f8ff" stroke-width="1.500"/><path d="M10 13V8q5 0 5 5z" fill="#f7ac33"/><path d="M19 9.500h10v3H19zM19 15.500h10v3H19z" fill="#1473ae" stroke="#bae8fc"/><path d="M7 21h3M12 21h3" stroke="#fac345" stroke-width="2"/><path d="M15 23q-7 6-4 8h12q4-2-3-8z" fill="#e5e9eb" stroke="#999"/></svg></div>
  <div class="task pc"><svg width="32" height="32"><path d="M2 10l6-2v15l-6-1z" fill="#d8dbdd" stroke="#838383"/><path d="M10 3l20 2-3 16-18-4z" fill="#0b23b7" stroke="#c3cad0" stroke-width="2"/><path d="M20 4l8 2-2 13-10-2z" fill="#3c6dde"/><path d="M14 12l3 4 7-9" fill="none" stroke="#fff" stroke-width="1.500"/><path d="M17 21h5v4q6 1 5 3-8 3-15-1 0-2 5-2z" fill="#d8dadb"/></svg></div>
  <div class="tray"><svg width="90" height="24"><path d="M0 15.500 4 11.500l4 4z" fill="#fff" stroke="#795d2b" stroke-width=".6"/><path d="M21.500 5v15" stroke="#fff" stroke-width="1.600"/><path d="M22.500 7h4l2 2h5v6h-5l-2-1h-4z" fill="#f4eedf" stroke="#5e4820" stroke-width=".6"/><circle cx="31" cy="15.500" r="4.500" fill="#dd2830"/><path d="M29 13.500l4 4M33 13.500l-4 4" stroke="#fff" stroke-width="1.500"/><path d="M46.500 5.500v3M50 5.500v3M45 8.500h7v3q-1 1.500-3 1.500v6.500h-1.500V13q-2 0-2.500-2z" stroke="#fff" stroke-width=".8" fill="#fff"/><path d="M53.500 7h6v12h-6z" fill="#b58d37" stroke="#fff" stroke-width="1.800"/><path d="M55 5h3" stroke="#fff" stroke-width="1.500"/><path d="M71 10.500h3l4-4v13l-4-4h-3z" fill="#fff" stroke="#5f4922" stroke-width=".6"/><path d="M80.500 10.500q2 2.500 0 5" stroke="#fff" fill="none" stroke-width="1.500"/></svg><div class="clock"><span>9:58 AM</span><span>6/22/2016</span></div></div>
</footer>

<div class="menu">
  <div class="item strong">Collapse</div><hr>
  <div class="item">Pin to Start</div><div class="item"><svg width="16" height="16"><path d="M8 .8l6.500 2v5q0 5-6.500 7.500Q1.500 12.800 1.500 7.800v-5z" fill="#fff" stroke="#888"/><path d="M8 2v6H3V3.500zM8 8h5q0 4-5 6z" fill="#2878c4"/><path d="M8 2l5 1.500V8H8zM3 8h5v6Q3 12 3 8z" fill="#fbd23b"/></svg>Manage</div><div class="item">Open in new window</div><hr>
  <div class="item">Map network drive...</div><div class="item">Disconnect network drive...</div><hr>
  <div class="item">Add a network location</div><hr>
  <div class="item">Delete</div><div class="item">Rename</div><hr>
  <div class="item hot">Properties</div>
</div>
<svg class="pointer" width="380" height="40"><path d="M5 19 189.500 5v7h184v14h-184v7z" fill="none" stroke="#3f48cc" stroke-width="5" stroke-linejoin="miter" stroke-miterlimit="2"/></svg>
<p class="note n1">Setelah Instalasi, Klik This PC atau My Computer</p>
<p class="note n2">Lalu Klik Properties</p>
<p class="note n3">Ini Tombol Properties</p>
</body>
</html>
```
FILE: styles.css
```css
* { box-sizing: border-box; }
body { margin: 0; width: 1366px; height: 768px; overflow: hidden; position: relative; background: #fff; color: #000; font: 12px/21px "Open Sans", "Noto Sans", sans-serif; letter-spacing: -.27px; white-space: nowrap; }
svg { flex: none; display: block; }
.defs { position: absolute; }
.window { height: 728px; display: flex; flex-direction: column; }
i, em, b { font-style: normal; font-weight: normal; }

.titlebar { height: 23px; flex: none; display: flex; background: #f0c869; border-bottom: 1px solid #cfa758; }
.quick { width: 229px; display: flex; align-items: flex-start; padding-top: 5px; }
.quick .bar { width: 1px; height: 12px; background: #a48850; margin-left: 7px; }
.quick svg:first-child { margin-top: 1px; }
.q2 { margin: -1px 0 0 10px; }
.q3 { margin: -1px 0 0 6px; }
.q4 { margin: 4px 7px 0 7px; }
.quick .q4 + .bar { margin-left: 0; }
.drive-tools { width: 71px; height: 23px; background: #c3eb92; color: #47582f; text-align: center; font-size: 11.500px; line-height: 20px; letter-spacing: -.2px; }
.caption { flex: 1; padding-left: 439px; font-size: 15px; line-height: 23px; color: #3c3320; letter-spacing: -.2px; }
.controls { display: flex; width: 99px; margin-right: 3px; }
.controls > svg { width: 54px; }
.close { width: 45px; height: 19px; background: #c75050; display: flex; justify-content: center; align-items: center; }

.tabs { height: 24px; flex: none; display: flex; border-bottom: 1px solid #dadbdc; color: #333; line-height: 26px; text-align: center; }
.file { width: 56px; height: 23px; background: #1979ca; color: #fff; line-height: 24px; }
.home { width: 58px; height: 24px; background: #f5f6f7; border: 1px solid #dadbdc; border-width: 1px 1px 0; line-height: 23px; letter-spacing: -.5px; }
.share { width: 57px; }
.view { width: 58px; padding-right: 3px; }
.manage { width: 71px; border: solid #e2e2e2; border-width: 0 1px; letter-spacing: -.4px; }
.help { margin-left: auto; display: flex; align-items: center; padding-right: 4px; gap: 10px; }
.help b { width: 14px; height: 14px; border-radius: 50%; background: #1979ca; color: #fff; font-weight: bold; line-height: 14px; }

.ribbon { height: 92px; flex: none; display: flex; background: #f5f6f7; border-bottom: 1px solid #dadbdc; color: #262626; line-height: 13px; }
.group { position: relative; padding-top: 6px; height: 89px; display: flex; flex-direction: column; }
.group::after { content: ""; position: absolute; right: 0; top: 2px; width: 1px; height: 86px; background: #e2e3e4; }
.group footer { margin-top: auto; height: 13px; text-align: center; color: #8c8c8c; line-height: 13px; letter-spacing: -.1px; padding-right: 2px; }
.tools { display: flex; height: 70px; }
.clip { width: 196px; padding-left: 5px; }
.org { width: 191px; padding-left: 4px; }
.new { width: 145px; padding-left: 4px; }
.open { width: 133px; padding-left: 3px; }
.sel { width: 115px; }
.clip footer, .org footer, .new footer, .open footer { margin-left: -4px; }
.big { width: 42px; display: flex; flex-direction: column; align-items: center; text-align: center; }
.big > svg:first-child { margin-bottom: 4px; }
.big .car { color: #222; margin-top: 4px; }
.off { color: #8c8c8c; }
.off .car { color: #a5a5a5 !important; }
.big span .car { display: inline-block; margin: 0 0 2px 2px; }
.split { width: 1px; height: 56px; margin: 3px 2px 0 4px; background: #dcdde0; }
.del { width: 42px; color: #222; }
.del + .big { width: 46px; letter-spacing: -.5px; }
.prop { width: 60px; letter-spacing: -.5px; margin-left: -1px; }
.list { display: flex; flex-direction: column; letter-spacing: -.35px; }
.list > div { height: 22px; display: flex; align-items: center; gap: 3px; line-height: 22px; margin-top: -2px; margin-bottom: 2px; }
.clip .list { margin-left: 4px; letter-spacing: -.55px; }
.new .list { margin-left: 3px; letter-spacing: -.45px; }
.open .list { margin-left: 2px; }
.sel .list { margin-left: 7px; letter-spacing: -.48px; }
.list .car { color: #222; margin-left: 0; }

.address { height: 37px; flex: none; display: flex; padding-top: 7px; color: #1e1e1e; }
.address > svg { margin: -6px 4px 0 0; }
.path { width: 1049px; height: 22px; border: 1px solid #d9d9d9; display: flex; align-items: center; line-height: 20px; padding-left: 2px; }
.path > svg { margin-top: 1px; }
.arrow { border: 3.500px solid transparent; border-left: 4px solid #777; border-right: 0; margin: 0 9px 0 8px; }
.a1 { width: 42px; }
.a2 { width: 75px; letter-spacing: -.2px; }
.refresh { margin-left: auto; height: 20px; width: 39px; }
.search { width: 185px; height: 22px; margin-left: 12px; border: 1px solid #d9d9d9; display: flex; align-items: center; justify-content: space-between; padding: 0 8px; color: #6d6d6d; line-height: 20px; }

.body { height: 529px; flex: none; display: flex; overflow: hidden; }
.side { width: 158px; padding-top: 9px; border-right: 1px solid #f2f2f2; }
.node { height: 21px; width: 155px; margin-left: 1px; display: flex; align-items: center; padding-left: 18px; line-height: 21px; letter-spacing: -.37px; }
.node.disk { letter-spacing: -.22px; }
.node.top { padding-left: 8px; }
.node.on { background: #cbe8f6; outline: 1px solid #26a0da; outline-offset: -1px; }
.tw { width: 8px; height: 10px; margin-right: 3px; }
.ic { width: 16px; height: 16px; margin-right: 5px; }
.files { flex: 1; color: #6d6d6d; }
.head { position: relative; height: 31px; display: grid; grid-template-columns: 273px 120px 120px 80px; color: #4c607a; line-height: 26px; }
.head span { height: 21px; border-right: 1px solid #e0edf7; padding-left: 6px; }
.head span:first-child { padding-left: 18px; }
.sort { position: absolute; left: 138px; top: 1px; }
.row { height: 21px; display: grid; grid-template-columns: 20px 240px 120px 120px 66px; padding-left: 19px; align-items: center; line-height: 21px; }
.row svg { width: 16px; height: 16px; margin-top: -1px; }
.row b { color: #000; overflow: hidden; height: 21px; letter-spacing: -.25px; }
.row .rar { letter-spacing: -.35px; }
.row b + span { letter-spacing: -.46px; }
.row em { text-align: right; letter-spacing: -.6px; }
.row .tail { padding-left: 164px; }
.scroll { width: 16px; display: flex; flex-direction: column; background: #f0f0f0; }
.scroll i { height: 317px; margin: 1px 1px auto 0; background: #cdcdcd; }

.status { height: 23px; display: flex; padding-left: 14px; color: #1e395b; line-height: 24px; letter-spacing: -.4px; }
.status i { width: 1px; height: 12px; margin: 6px 0 0 10px; background: #eee; }
.views { margin-left: auto; display: flex; align-items: center; padding-right: 8px; gap: 5px; }
.details { width: 22px; height: 23px; background: #cbe8f6; border: 1px solid #26a0da; display: flex; align-items: center; justify-content: center; }

.taskbar { height: 40px; position: relative; display: flex; align-items: center; }
.wall { position: absolute; inset: 0; z-index: -1; }
.start { width: 62px; padding-left: 11px; }
.ie { width: 52px; padding-left: 4px; }
.task { width: 59px; height: 39px; margin: 1px 3px 0 0; border: 1px solid rgba(255,235,190,.58); outline: 1px solid rgba(100,65,10,.35); background: rgba(235,205,150,.3); display: flex; align-items: center; justify-content: center; }
.task.active { border-color: #fff8e8; }
.stack { padding-right: 5px; background-image: linear-gradient(90deg, transparent 52px, #e6d09f 52px 53px, #8a6425 53px 54px, transparent 54px); }
.active.stack { background: linear-gradient(90deg, transparent 52px, #fff 52px 53px, #8a6425 53px 54px, transparent 54px), linear-gradient(110deg, #c5a672, #e0cfaa); }
.line { position: relative; width: 32px; height: 32px; background: #00b900; border-radius: 5px; }
.line b { position: absolute; inset: 0; text-align: center; line-height: 28px; font-size: 7px; font-weight: 800; color: #00a500; letter-spacing: -.1px; }
.aimp { background: linear-gradient(90deg, #55975c, #45e34e 36px, rgba(205,160,90,.5) 36px); padding-right: 1px; }
.warm { background: rgba(220,150,100,.5); }
.pc { background: rgba(170,145,95,.7); }
.tray { margin-left: auto; display: flex; align-items: center; color: #fff; }
.tray > svg { width: 90px; }
.clock { width: 54px; margin: 0 16px 0 11px; display: flex; flex-direction: column; align-items: center; line-height: 17px; letter-spacing: -.35px; }

.menu { position: absolute; left: 131px; top: 343px; width: 233px; height: 261px; border: 1px solid #979797; padding: 2px; box-shadow: 3px 3px 3px rgba(0,0,0,.5); background: linear-gradient(90deg, transparent 30px, #dedede 30px 31px, #fff 31px 32px, transparent 32px) #f0f0f0; }
.item { position: relative; height: 22px; line-height: 22px; padding-left: 32px; letter-spacing: -.33px; }
.item svg { position: absolute; left: 3px; top: 3px; }
.item.strong { font-weight: bold; letter-spacing: -.65px; }
.menu hr { height: 1px; margin: 3px 0 3px 29px; border: 0; background: #d7d7d7; }
.item.hot { background: rgba(180,215,245,.5); outline: 1px solid #78aee5; outline-offset: -1px; letter-spacing: -.5px; }
.pointer { position: absolute; left: 384px; top: 575px; }
.note { position: absolute; margin: 0; color: #3f48cc; font: 17px/23px Lato, sans-serif; letter-spacing: .13px; }
.n1 { left: 829px; top: 299px; }
.n2 { left: 829px; top: 345px; }
.n3 { left: 778px; top: 581px; letter-spacing: .32px; }
```
